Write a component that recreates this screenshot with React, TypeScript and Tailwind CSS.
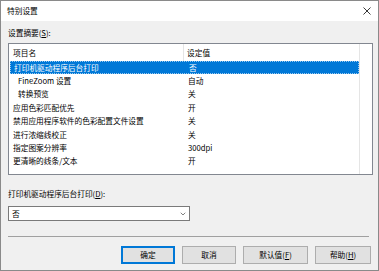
import { ChevronDown } from "lucide-react";

type Row = { name: string; value: string; indent?: boolean; selected?: boolean };

const rows: Row[] = [
  { name: "打印机驱动程序后台打印", value: "否", selected: true },
  { name: "FineZoom 设置", value: "自动", indent: true },
  { name: "转换预览", value: "关", indent: true },
  { name: "应用色彩匹配优先", value: "开" },
  { name: "禁用应用程序软件的色彩配置文件设置", value: "关" },
  { name: "进行浓缩线校正", value: "关" },
  { name: "指定图案分辨率", value: "300dpi" },
  { name: "更清晰的线条/文本", value: "开" },
];

function DlgButton({
  width,
  primary,
  children,
}: {
  width: string;
  primary?: boolean;
  children: React.ReactNode;
}) {
  return (
    <button
      type="button"
      className={`${width} flex h-[18px] items-center justify-center bg-[#e1e1e1] ${
        primary ? "border-2 border-[#0078d7]" : "border border-[#adadad]"
      }`}
    >
      {children}
    </button>
  );
}

export default function App() {
  return (
    <div className="flex h-[271px] w-[379px] flex-col border border-[#8a8a8a] bg-[#f0f0f0] font-['Noto_Sans_CJK_SC',sans-serif] text-[7.7px] leading-[12px] text-black">
      {/* title bar */}
      <div className="flex h-[20px] shrink-0 items-center justify-between bg-white pl-[6px] pr-[6px]">
        <span>特别设置</span>
        <svg width="8" height="8" viewBox="0 0 8 8" className="mr-[1px]">
          <path d="M0.5 0.5 L7.5 7.5 M7.5 0.5 L0.5 7.5" stroke="#222" strokeWidth="0.9" />
        </svg>
      </div>

      <div className="flex flex-1 flex-col pl-[7px] pr-[5px] pt-[6px]">
        <div className="h-[12px]">
          设置摘要(<span className="underline">S</span>):
        </div>

        {/* list view */}
        <div className="relative mt-[4px] h-[132px] w-[365px] overflow-hidden border border-[#828790] bg-white">
          <div className="absolute bottom-0 left-[350px] top-0 w-px bg-[#e5e5e5]" />
          <div className="flex h-[17px] items-center">
            <div className="flex h-full w-[175px] items-center border-r border-[#e5e5e5] pl-[4px]">项目名</div>
            <div className="pl-[3px]">设定值</div>
          </div>
          {rows.map((r) => (
            <div
              key={r.name}
              className={`ml-[1px] flex h-[13.4px] w-[349px] items-center ${
                r.selected ? "border border-dotted border-[#99c9ef] bg-[#0078d7] text-white" : ""
              }`}
            >
              <div className={`w-[175px] ${r.indent ? "pl-[8px]" : "pl-[3px]"}`}>{r.name}</div>
              <div className="pl-[3px]">{r.value}</div>
            </div>
          ))}
        </div>

        <div className="mt-[13px] h-[12px]">
          打印机驱动程序后台打印(<span className="underline">D</span>):
        </div>
        <div className="mt-[6px] flex h-[15px] w-[182px] items-center justify-between border border-[#7a7a7a] bg-white pl-[3px] pr-[2px]">
          <span>否</span>
          <ChevronDown size={8} strokeWidth={1.5} />
        </div>

        <div className="mt-[15px] h-px w-[361px] bg-[#a0a0a0]" />

        <div className="mt-[9px] flex justify-end gap-[7px] pr-[2px]">
          <DlgButton width="w-[54px]" primary>
            确定
          </DlgButton>
          <DlgButton width="w-[54px]">取消</DlgButton>
          <DlgButton width="w-[65px]">
            默认值(<span className="underline">F</span>)
          </DlgButton>
          <DlgButton width="w-[56px]">
            帮助(<span className="underline">H</span>)
          </DlgButton>
        </div>
      </div>
    </div>
  );
}
